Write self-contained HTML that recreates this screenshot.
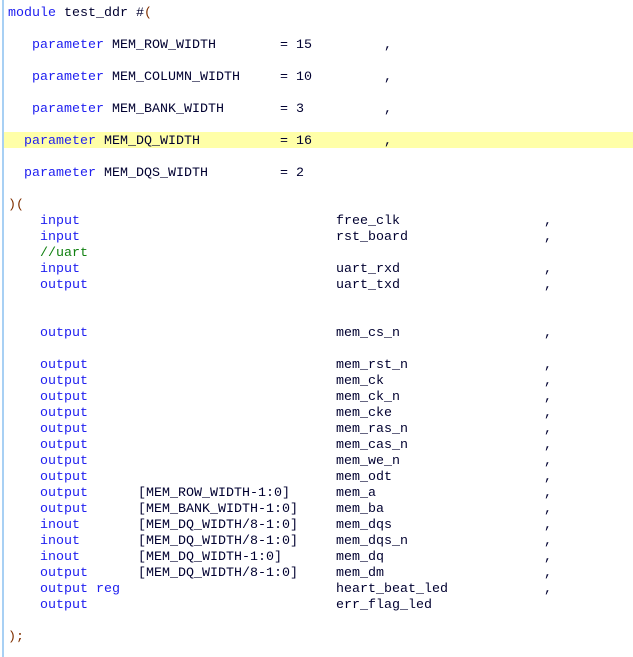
<!DOCTYPE html>
<html><head><meta charset="utf-8"><style>
html,body{margin:0;padding:0;background:#fff;width:633px;height:657px;overflow:hidden;position:relative}
.bar{position:absolute;left:2px;top:0;width:2px;height:657px;background:#a8d0f4}
.hl{position:absolute;left:4px;top:132px;width:629px;height:16px;background:#ffffa8}
.w{position:absolute;left:0;top:2px;width:633px;height:655px}
.l{position:absolute;height:16px;line-height:16px;font-family:"Liberation Mono",monospace;font-size:13.33px;white-space:pre;color:#000030}
.k{color:#2020f0}
.c{color:#108010}
.p{color:#803000}
</style></head><body>
<div class="bar"></div>
<div class="hl"></div>
<div class="w">
<div class="l" style="left:8px;top:4px"><span class="k">module</span> test_ddr #<span class="p">(</span></div>

<div class="l" style="left:32px;top:36px"><span class="k">parameter</span> MEM_ROW_WIDTH</div><div class="l" style="left:280px;top:36px">= 15</div><div class="l" style="left:384px;top:36px">,</div>
<div class="l" style="left:32px;top:68px"><span class="k">parameter</span> MEM_COLUMN_WIDTH</div><div class="l" style="left:280px;top:68px">= 10</div><div class="l" style="left:384px;top:68px">,</div>
<div class="l" style="left:32px;top:100px"><span class="k">parameter</span> MEM_BANK_WIDTH</div><div class="l" style="left:280px;top:100px">= 3</div><div class="l" style="left:384px;top:100px">,</div>
<div class="l" style="left:24px;top:132px"><span class="k">parameter</span> MEM_DQ_WIDTH</div><div class="l" style="left:280px;top:132px">= 16</div><div class="l" style="left:384px;top:132px">,</div>
<div class="l" style="left:24px;top:164px"><span class="k">parameter</span> MEM_DQS_WIDTH</div><div class="l" style="left:280px;top:164px">= 2</div>

<div class="l p" style="left:8px;top:196px">)(</div>

<div class="l k" style="left:40px;top:212px">input</div><div class="l" style="left:336px;top:212px">free_clk</div><div class="l" style="left:544px;top:212px">,</div>
<div class="l k" style="left:40px;top:228px">input</div><div class="l" style="left:336px;top:228px">rst_board</div><div class="l" style="left:544px;top:228px">,</div>
<div class="l c" style="left:40px;top:244px">//uart</div>
<div class="l k" style="left:40px;top:260px">input</div><div class="l" style="left:336px;top:260px">uart_rxd</div><div class="l" style="left:544px;top:260px">,</div>
<div class="l k" style="left:40px;top:276px">output</div><div class="l" style="left:336px;top:276px">uart_txd</div><div class="l" style="left:544px;top:276px">,</div>

<div class="l k" style="left:40px;top:324px">output</div><div class="l" style="left:336px;top:324px">mem_cs_n</div><div class="l" style="left:544px;top:324px">,</div>

<div class="l k" style="left:40px;top:356px">output</div><div class="l" style="left:336px;top:356px">mem_rst_n</div><div class="l" style="left:544px;top:356px">,</div>
<div class="l k" style="left:40px;top:372px">output</div><div class="l" style="left:336px;top:372px">mem_ck</div><div class="l" style="left:544px;top:372px">,</div>
<div class="l k" style="left:40px;top:388px">output</div><div class="l" style="left:336px;top:388px">mem_ck_n</div><div class="l" style="left:544px;top:388px">,</div>
<div class="l k" style="left:40px;top:404px">output</div><div class="l" style="left:336px;top:404px">mem_cke</div><div class="l" style="left:544px;top:404px">,</div>
<div class="l k" style="left:40px;top:420px">output</div><div class="l" style="left:336px;top:420px">mem_ras_n</div><div class="l" style="left:544px;top:420px">,</div>
<div class="l k" style="left:40px;top:436px">output</div><div class="l" style="left:336px;top:436px">mem_cas_n</div><div class="l" style="left:544px;top:436px">,</div>
<div class="l k" style="left:40px;top:452px">output</div><div class="l" style="left:336px;top:452px">mem_we_n</div><div class="l" style="left:544px;top:452px">,</div>
<div class="l k" style="left:40px;top:468px">output</div><div class="l" style="left:336px;top:468px">mem_odt</div><div class="l" style="left:544px;top:468px">,</div>
<div class="l k" style="left:40px;top:484px">output</div><div class="l" style="left:138px;top:484px">[MEM_ROW_WIDTH-1:0]</div><div class="l" style="left:336px;top:484px">mem_a</div><div class="l" style="left:544px;top:484px">,</div>
<div class="l k" style="left:40px;top:500px">output</div><div class="l" style="left:138px;top:500px">[MEM_BANK_WIDTH-1:0]</div><div class="l" style="left:336px;top:500px">mem_ba</div><div class="l" style="left:544px;top:500px">,</div>
<div class="l k" style="left:40px;top:516px">inout</div><div class="l" style="left:138px;top:516px">[MEM_DQ_WIDTH/8-1:0]</div><div class="l" style="left:336px;top:516px">mem_dqs</div><div class="l" style="left:544px;top:516px">,</div>
<div class="l k" style="left:40px;top:532px">inout</div><div class="l" style="left:138px;top:532px">[MEM_DQ_WIDTH/8-1:0]</div><div class="l" style="left:336px;top:532px">mem_dqs_n</div><div class="l" style="left:544px;top:532px">,</div>
<div class="l k" style="left:40px;top:548px">inout</div><div class="l" style="left:138px;top:548px">[MEM_DQ_WIDTH-1:0]</div><div class="l" style="left:336px;top:548px">mem_dq</div><div class="l" style="left:544px;top:548px">,</div>
<div class="l k" style="left:40px;top:564px">output</div><div class="l" style="left:138px;top:564px">[MEM_DQ_WIDTH/8-1:0]</div><div class="l" style="left:336px;top:564px">mem_dm</div><div class="l" style="left:544px;top:564px">,</div>
<div class="l k" style="left:40px;top:580px">output reg</div><div class="l" style="left:336px;top:580px">heart_beat_led</div><div class="l" style="left:544px;top:580px">,</div>
<div class="l k" style="left:40px;top:596px">output</div><div class="l" style="left:336px;top:596px">err_flag_led</div>

<div class="l p" style="left:8px;top:628px">);</div>
</div>
</body></html>
